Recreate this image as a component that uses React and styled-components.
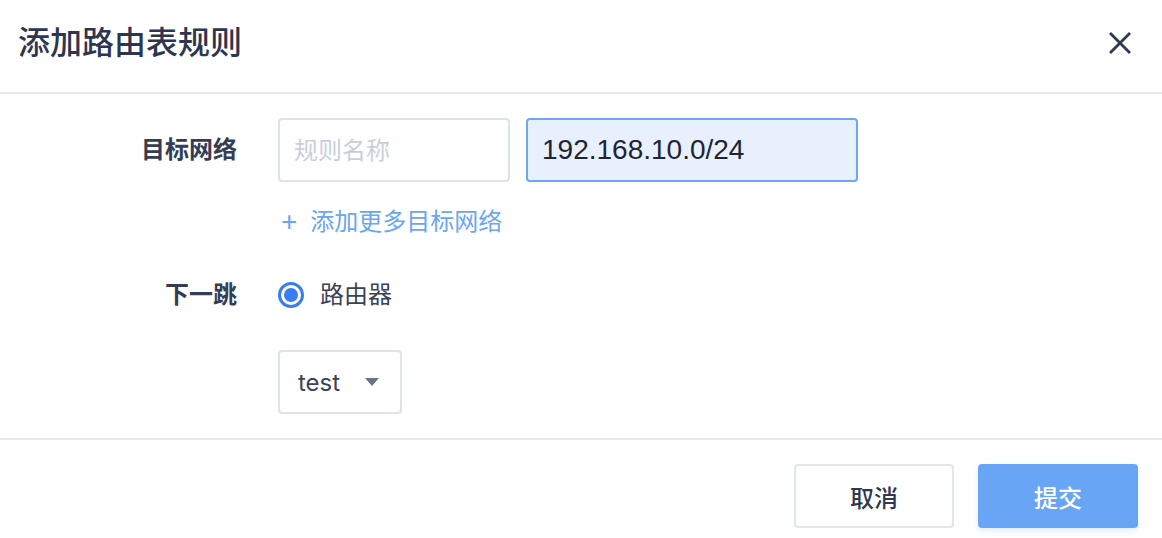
import React, { useState } from 'react';
import styled, { createGlobalStyle, css } from 'styled-components';

const GlobalStyle = createGlobalStyle`
  html, body {
    margin: 0;
    padding: 0;
    background: #fff;
  }
  body {
    font-family: Inter, "Noto Sans CJK SC", sans-serif;
    color: #333c54;
  }
  * {
    box-sizing: border-box;
  }
`;

const CloseIcon = () => (
  <svg width="22" height="22" viewBox="0 0 22 22">
    <path d="M2 2 L20 20 M20 2 L2 20" stroke="#2f3954" strokeWidth="2.8" strokeLinecap="square" fill="none" />
  </svg>
);

const Caret = () => (
  <svg width="14" height="8" viewBox="0 0 14 8">
    <path d="M0 0 H14 L7 8 Z" fill="#6c7386" />
  </svg>
);

function App() {
  const [network, setNetwork] = useState('192.168.10.0/24');
  const [name, setName] = useState('');

  return (
    <Modal>
      <GlobalStyle />
      <Header>
        <Title>添加路由表规则</Title>
        <CloseButton type="button">
          <CloseIcon />
        </CloseButton>
      </Header>

      <Body>
        <Label>目标网络</Label>
        <Field>
          <InputRow>
            <Input width={232} placeholder="规则名称" value={name} onChange={e => setName(e.target.value)} />
            <Input width={332} active value={network} onChange={e => setNetwork(e.target.value)} />
          </InputRow>
          <AddLink>
            <Plus>+</Plus>添加更多目标网络
          </AddLink>
        </Field>

        <Label next>下一跳</Label>
        <Field next>
          <RadioRow>
            <Radio />
            <span>路由器</span>
          </RadioRow>
          <Select>
            <span>test</span>
            <Caret />
          </Select>
        </Field>
      </Body>

      <Footer>
        <Button type="button">取消</Button>
        <Button type="button" primary>提交</Button>
      </Footer>
    </Modal>
  );
}

const Modal = styled.div`
  width: 1162px;
  height: 538px;
  display: flex;
  flex-direction: column;
  background: #fff;
`;

const Header = styled.div`
  height: 94px;
  display: flex;
  align-items: center;
  justify-content: space-between;
  padding: 0 31px 6px 18px;
  border-bottom: 2px solid #e6e9ef;
`;

const Title = styled.div`
  font-size: 32px;
  font-weight: 500;
  color: #2d3651;
  line-height: 40px;
`;

const CloseButton = styled.button`
  border: none;
  background: none;
  padding: 0;
  display: flex;
  cursor: pointer;
`;

const Body = styled.div`
  display: grid;
  grid-template-columns: 237px 1fr;
  column-gap: 41px;
  padding: 24px 0 24px;
  border-bottom: 2px solid #e6e9ef;
`;

const Label = styled.div`
  text-align: right;
  font-size: 24px;
  font-weight: 600;
  color: #343d54;
  line-height: 32px;
  padding-top: 16px;
  ${props => props.next && css`
    padding-top: 41px;
  `}
`;

const Field = styled.div`
  display: flex;
  flex-direction: column;
  align-items: flex-start;
  ${props => props.next && css`
    padding-top: 41px;
  `}
`;

const InputRow = styled.div`
  display: flex;
  gap: 16px;
`;

const Input = styled.input`
  width: ${props => props.width}px;
  height: 64px;
  padding: 0 14px;
  border: 2px solid #dde2eb;
  border-radius: 4px;
  font-family: "Liberation Sans", "Noto Sans CJK SC", sans-serif;
  font-size: 28px;
  color: #1f2433;
  background: #fff;
  outline: none;
  &::placeholder {
    font-family: "Noto Sans CJK SC", sans-serif;
    font-size: 24px;
    color: #c7cfdb;
  }
  ${props => props.active && css`
    background: #e8f0fd;
    border-color: #6fa6f4;
  `}
`;

const AddLink = styled.div`
  margin-top: 24px;
  font-size: 24px;
  line-height: 32px;
  color: #6ba6f0;
  display: flex;
  align-items: center;
  padding-left: 3px;
  cursor: pointer;
`;

const Plus = styled.span`
  font-family: "Liberation Sans", sans-serif;
  font-size: 28px;
  margin-right: 13px;
  font-weight: 400;
`;

const RadioRow = styled.div`
  display: flex;
  align-items: center;
  gap: 16px;
  font-size: 24px;
  line-height: 32px;
  color: #3a4257;
`;

const Radio = styled.span`
  width: 26px;
  height: 26px;
  border-radius: 50%;
  border: 3px solid #3a7cf1;
  display: flex;
  align-items: center;
  justify-content: center;
  &::after {
    content: '';
    width: 14px;
    height: 14px;
    border-radius: 50%;
    background: #3a7cf1;
  }
`;

const Select = styled.div`
  margin-top: 39px;
  width: 124px;
  height: 64px;
  border: 2px solid #dde2eb;
  border-radius: 4px;
  display: flex;
  align-items: center;
  justify-content: space-between;
  padding: 0 21px 0 18px;
  font-size: 24px;
  color: #3a4257;
`;

const Footer = styled.div`
  display: flex;
  justify-content: flex-end;
  gap: 24px;
  padding: 24px 24px 0 0;
`;

const Button = styled.button`
  width: 160px;
  height: 64px;
  border-radius: 4px;
  font-family: Inter, "Noto Sans CJK SC", sans-serif;
  font-size: 24px;
  font-weight: 500;
  cursor: pointer;
  border: 2px solid #e1e5ec;
  background: #fff;
  color: #2f3850;
  ${props => props.primary && css`
    border-color: #69a5f5;
    background: #69a5f5;
    color: #fff;
    box-shadow: 0 3px 6px rgba(105, 165, 245, 0.2);
  `}
`;

export default App;
